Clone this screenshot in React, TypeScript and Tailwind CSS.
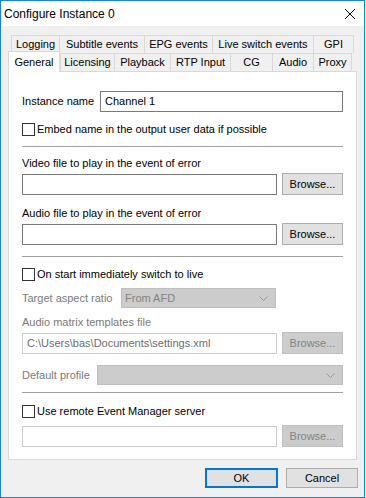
import React from 'react';

const font = { fontFamily: '"Liberation Sans", Arial, sans-serif' };

function Tab({ label, w, last }: { label: string; w: string; last?: boolean }) {
  return (
    <div
      className={`${w} h-[18px] flex items-center justify-center border-t border-l border-[#d9d9d9] bg-[#f0f0f0] text-[11px] text-black ${last ? 'border-r' : ''}`}
    >
      {label}
    </div>
  );
}

function Checkbox({ label }: { label: string }) {
  return (
    <div className="flex items-center h-[13px]">
      <div className="w-[13px] h-[13px] border border-[#333333] bg-white" />
      <span className="ml-[2px] text-[11px] text-black leading-none">{label}</span>
    </div>
  );
}

function Browse({ disabled }: { disabled?: boolean }) {
  return (
    <div
      className={`w-[61px] h-[22px] flex items-center justify-center border text-[11px] ${
        disabled ? 'bg-[#cccccc] border-[#bfbfbf] text-[#838383]' : 'bg-[#e1e1e1] border-[#adadad] text-black'
      }`}
    >
      Browse...
    </div>
  );
}

function Chevron() {
  return (
    <svg width="9" height="5" viewBox="0 0 9 5" className="mr-[7px]">
      <path d="M0.5 0.5 L4.5 4.5 L8.5 0.5" fill="none" stroke="#9a9a9a" strokeWidth="1" />
    </svg>
  );
}

export default function App() {
  return (
    <div className="w-[366px] h-[498px] bg-white" style={font}>
      <div className="w-[365px] h-[498px] border border-[#1883d7] flex flex-col bg-[#f0f0f0]">
        {/* Title bar */}
        <div className="h-[25px] bg-white flex items-center justify-between pl-[3px] pr-[9px] shrink-0">
          <span className="text-[12px] text-black">Configure Instance 0</span>
          <svg width="10" height="10" viewBox="0 0 10 10">
            <path d="M0 0 L10 10 M10 0 L0 10" stroke="#000" strokeWidth="1" />
          </svg>
        </div>

        {/* Tabs */}
        <div className="pt-[9px]">
          <div className="flex ml-[10px]">
            <Tab label="Logging" w="w-[48px]" />
            <Tab label="Subtitle events" w="w-[85px]" />
            <Tab label="EPG events" w="w-[68px]" />
            <Tab label="Live switch events" w="w-[101px]" />
            <Tab label="GPI" w="w-[41px]" last />
          </div>
          <div className="flex items-end ml-[7px] h-[18px]">
            <div className="relative z-10 w-[52px] h-[21px] -mb-px bg-white border-t border-l border-r border-[#d9d9d9] flex items-start justify-center pt-[2px] text-[11px] text-black">
              General
            </div>
            <Tab label="Licensing" w="w-[54px]" />
            <Tab label="Playback" w="w-[56px]" />
            <Tab label="RTP Input" w="w-[60px]" />
            <Tab label="CG" w="w-[42px]" />
            <Tab label="Audio" w="w-[41px]" />
            <Tab label="Proxy" w="w-[39px]" last />
          </div>
        </div>

        {/* Panel */}
        <div className="ml-[7px] w-[349px] h-[389px] bg-white border border-[#d9d9d9] px-[13px] pt-[19px] flex flex-col text-[11px]">
          <div className="flex items-center">
            <span className="w-[78px] text-black">Instance name</span>
            <div className="flex-1 h-[21px] border border-[#7a7a7a] flex items-center pl-[4px] text-black">Channel 1</div>
          </div>
          <div className="mt-[11px]">
            <Checkbox label="Embed name in the output user data if possible" />
          </div>
          <div className="mt-[10px] h-px bg-[#a0a0a0]" />

          <div className="mt-[8px] h-[16px] flex items-center text-black">Video file to play in the event of error</div>
          <div className="mt-[2px] flex items-center gap-[5px]">
            <div className="w-[255px] h-[21px] border border-[#7a7a7a]" />
            <Browse />
          </div>
          <div className="mt-[10px] h-[16px] flex items-center text-black">Audio file to play in the event of error</div>
          <div className="mt-[2px] flex items-center gap-[5px]">
            <div className="w-[255px] h-[21px] border border-[#7a7a7a]" />
            <Browse />
          </div>
          <div className="mt-[11px] h-px bg-[#a0a0a0]" />

          <div className="mt-[11px]">
            <Checkbox label="On start immediately switch to live" />
          </div>
          <div className="mt-[7px] flex items-center">
            <span className="w-[99px] text-[#7a7a7a]">Target aspect ratio</span>
            <div className="w-[155px] h-[20px] bg-[#cccccc] border border-[#bfbfbf] flex items-center justify-between pl-[3px] text-[#838383]">
              From AFD
              <Chevron />
            </div>
          </div>
          <div className="mt-[6px] h-[16px] flex items-center text-[#7a7a7a]">Audio matrix templates file</div>
          <div className="mt-[2px] flex items-center gap-[5px]">
            <div className="w-[255px] h-[21px] border border-[#cccccc] flex items-center pl-[4px] text-[#6d6d6d]">
              C:\Users\bas\Documents\settings.xml
            </div>
            <Browse disabled />
          </div>
          <div className="mt-[11px] flex items-center">
            <span className="w-[75px] text-[#7a7a7a]">Default profile</span>
            <div className="flex-1 h-[20px] bg-[#cccccc] border border-[#bfbfbf] flex items-center justify-end">
              <Chevron />
            </div>
          </div>
          <div className="mt-[7px] h-px bg-[#a0a0a0]" />

          <div className="mt-[12px]">
            <Checkbox label="Use remote Event Manager server" />
          </div>
          <div className="mt-[7px] flex items-center gap-[5px]">
            <div className="w-[255px] h-[21px] border border-[#cccccc]" />
            <Browse disabled />
          </div>
        </div>

        {/* Buttons */}
        <div className="flex justify-end gap-[8px] pr-[6px] mt-[8px]">
          <div className="w-[73px] h-[20px] border-2 border-[#0078d7] bg-[#e1e1e1] flex items-center justify-center text-[11px] text-black">
            OK
          </div>
          <div className="w-[72px] h-[20px] border border-[#adadad] bg-[#e1e1e1] flex items-center justify-center text-[11px] text-black">
            Cancel
          </div>
        </div>
      </div>
    </div>
  );
}
